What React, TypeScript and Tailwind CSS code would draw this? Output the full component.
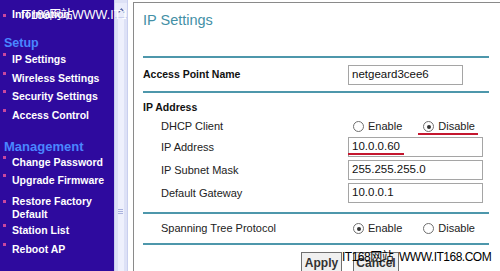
import React from 'react';

const font = { fontFamily: '"Liberation Sans", Arial, "Noto Sans CJK SC", sans-serif' };

function NavItem({ label, second }: { label: string; second?: string }) {
  return (
    <div className={`flex items-start pl-[3px] ${second ? 'h-[31px] pt-[2px]' : 'h-[18.67px] items-center'}`}>
      <span className={`w-[3px] h-[3px] bg-[#c8479e] shrink-0 ${second ? 'mt-[5px]' : ''}`} />
      <div className="ml-[6px] text-white font-bold text-[10.5px] leading-[13px]">
        <div>{label}</div>
        {second && <div>{second}</div>}
      </div>
    </div>
  );
}

function Radio({ checked, label }: { checked?: boolean; label: string }) {
  return (
    <div className="flex items-center">
      <span className="w-[11px] h-[11px] rounded-full border border-[#6f6f6f] bg-white flex items-center justify-center">
        {checked && <span className="w-[4px] h-[4px] rounded-full bg-[#333]" />}
      </span>
      <span className="ml-[4px] text-[11px] text-[#222]">{label}</span>
    </div>
  );
}

function Field({ value, wide = true }: { value: string; wide?: boolean }) {
  return (
    <div
      className={`${wide ? 'w-[135px]' : 'w-[115px]'} h-[20px] border border-[#a5a5a5] bg-white pl-[3px] flex items-center text-[11.5px] text-[#111]`}
    >
      {value}
    </div>
  );
}

const Rule = () => <div className="h-[2px] bg-[#4d97ab]" />;

export default function App() {
  return (
    <div className="relative w-[500px] h-[271px] overflow-hidden bg-white flex" style={font}>
      {/* left menu */}
      <aside className="w-[114px] shrink-0 bg-[#2e0a9e] pt-[7px]">
        <div className="h-[16px] flex items-center pl-[3px]">
          <span className="w-[3px] h-[3px] bg-[#c8479e]" />
          <span className="ml-[6px] text-white font-bold text-[10.5px]">Information</span>
        </div>
        <div className="mt-[12px] h-[16px] flex items-center pl-[4px] text-[#4a86ff] font-bold text-[12.5px]">Setup</div>
        <div className="mt-[2px]">
          <NavItem label="IP Settings" />
          <NavItem label="Wireless Settings" />
          <NavItem label="Security Settings" />
          <NavItem label="Access Control" />
        </div>
        <div className="mt-[10px] h-[18px] flex items-center pl-[4px] text-[#4a86ff] font-bold text-[13px]">Management</div>
        <NavItem label="Change Password" />
        <NavItem label="Upgrade Firmware" />
        <NavItem label="Restore Factory" second="Default" />
        <NavItem label="Station List" />
        <NavItem label="Reboot AP" />
      </aside>

      {/* scrollbar */}
      <div className="w-[14px] shrink-0 bg-[#dde1f6] border-x border-[#c9cfee] flex flex-col items-center">
        <div className="w-full h-[15px] mt-[3px] bg-[#e9ecfb] border-b border-[#c9cfee] flex items-center justify-center">
          <svg width="7" height="5" viewBox="0 0 7 5">
            <path d="M0.5 4.5 L3.5 1 L6.5 4.5" fill="none" stroke="#5a6aa8" strokeWidth="1.2" />
          </svg>
        </div>
        <div className="flex-1 w-[6px] bg-[#eef0fc]" />
        <div className="absolute top-[209px] left-[118px] w-[5px] flex flex-col gap-[1px]">
          <span className="h-px bg-[#aab2de]" />
          <span className="h-px bg-[#aab2de]" />
          <span className="h-px bg-[#aab2de]" />
        </div>
      </div>
      <div className="w-[5px] shrink-0" />

      {/* content panel */}
      <main className="flex-1 mt-[2px] border-l border-t border-[#8a8a8a] pl-[9px] pr-[11px] text-[#222]">
        <div className="h-[53px] pt-[8px]">
          <h1 className="text-[14.5px] leading-[18px] text-[#4390a6]">IP Settings</h1>
        </div>
        <Rule />
        <div className="h-[33px] flex items-center">
          <div className="w-[205px] font-bold text-[10.5px] text-[#111]">Access Point Name</div>
          <Field value="netgeard3cee6" wide={false} />
        </div>
        <Rule />

        <div className="mt-[4px] h-[22px] flex items-center font-bold text-[10.5px] text-[#111]">IP Address</div>
        <div className="relative h-[15px] flex items-center">
          <div className="w-[205px] pl-[18px] text-[11px]">DHCP Client</div>
          <div className="flex gap-[21px] pl-[5px]">
            <Radio label="Enable" />
            <Radio checked label="Disable" />
          </div>
          <span className="absolute left-[275px] top-[14px] w-[60px] h-[2px] bg-[#c4162e]" />
        </div>
        <div className="relative mt-[3px] h-[20px] flex items-center">
          <div className="w-[205px] pl-[18px] text-[11px]">IP Address</div>
          <Field value="10.0.0.60" />
          <span className="absolute left-[205px] top-[16px] w-[56px] h-[2px] bg-[#c4162e]" />
        </div>
        <div className="mt-[3px] h-[20px] flex items-center">
          <div className="w-[205px] pl-[18px] text-[11px]">IP Subnet Mask</div>
          <Field value="255.255.255.0" />
        </div>
        <div className="mt-[3px] h-[20px] flex items-center">
          <div className="w-[205px] pl-[18px] text-[11px]">Default Gateway</div>
          <Field value="10.0.0.1" />
        </div>

        <div className="mt-[9px]">
          <Rule />
        </div>
        <div className="h-[29px] flex items-center">
          <div className="w-[205px] pl-[18px] text-[11px]">Spanning Tree Protocol</div>
          <div className="flex gap-[21px] pl-[5px]">
            <Radio checked label="Enable" />
            <Radio label="Disable" />
          </div>
        </div>
        <Rule />

        <div className="mt-[7px] flex gap-[11px] pl-[158px]">
          <button className="w-[41px] h-[22px] border border-[#707070] bg-[#f0f0f0] text-[12px] font-bold text-[#333]">
            Apply
          </button>
          <button className="w-[46px] h-[22px] border border-[#707070] bg-[#f0f0f0] text-[12px] font-bold text-[#333]">
            Cancel
          </button>
        </div>
      </main>

      {/* watermarks over the picture */}
      <div className="absolute left-[21px] top-[7px] whitespace-nowrap text-white text-[12px] leading-[16px] tracking-[-0.5px]">
        IT168网站
      </div>
      <div className="absolute left-[72px] top-[7px] w-[54px] overflow-hidden whitespace-nowrap text-white text-[12.5px] leading-[16px]">
        WWW.IT168.COM
      </div>
      <div className="absolute left-[342px] top-[249px] whitespace-nowrap text-black text-[12px] leading-[16px] tracking-[-0.5px]">
        IT168网站 <span className="ml-[3px]">WWW.IT168.COM</span>
      </div>
    </div>
  );
}
